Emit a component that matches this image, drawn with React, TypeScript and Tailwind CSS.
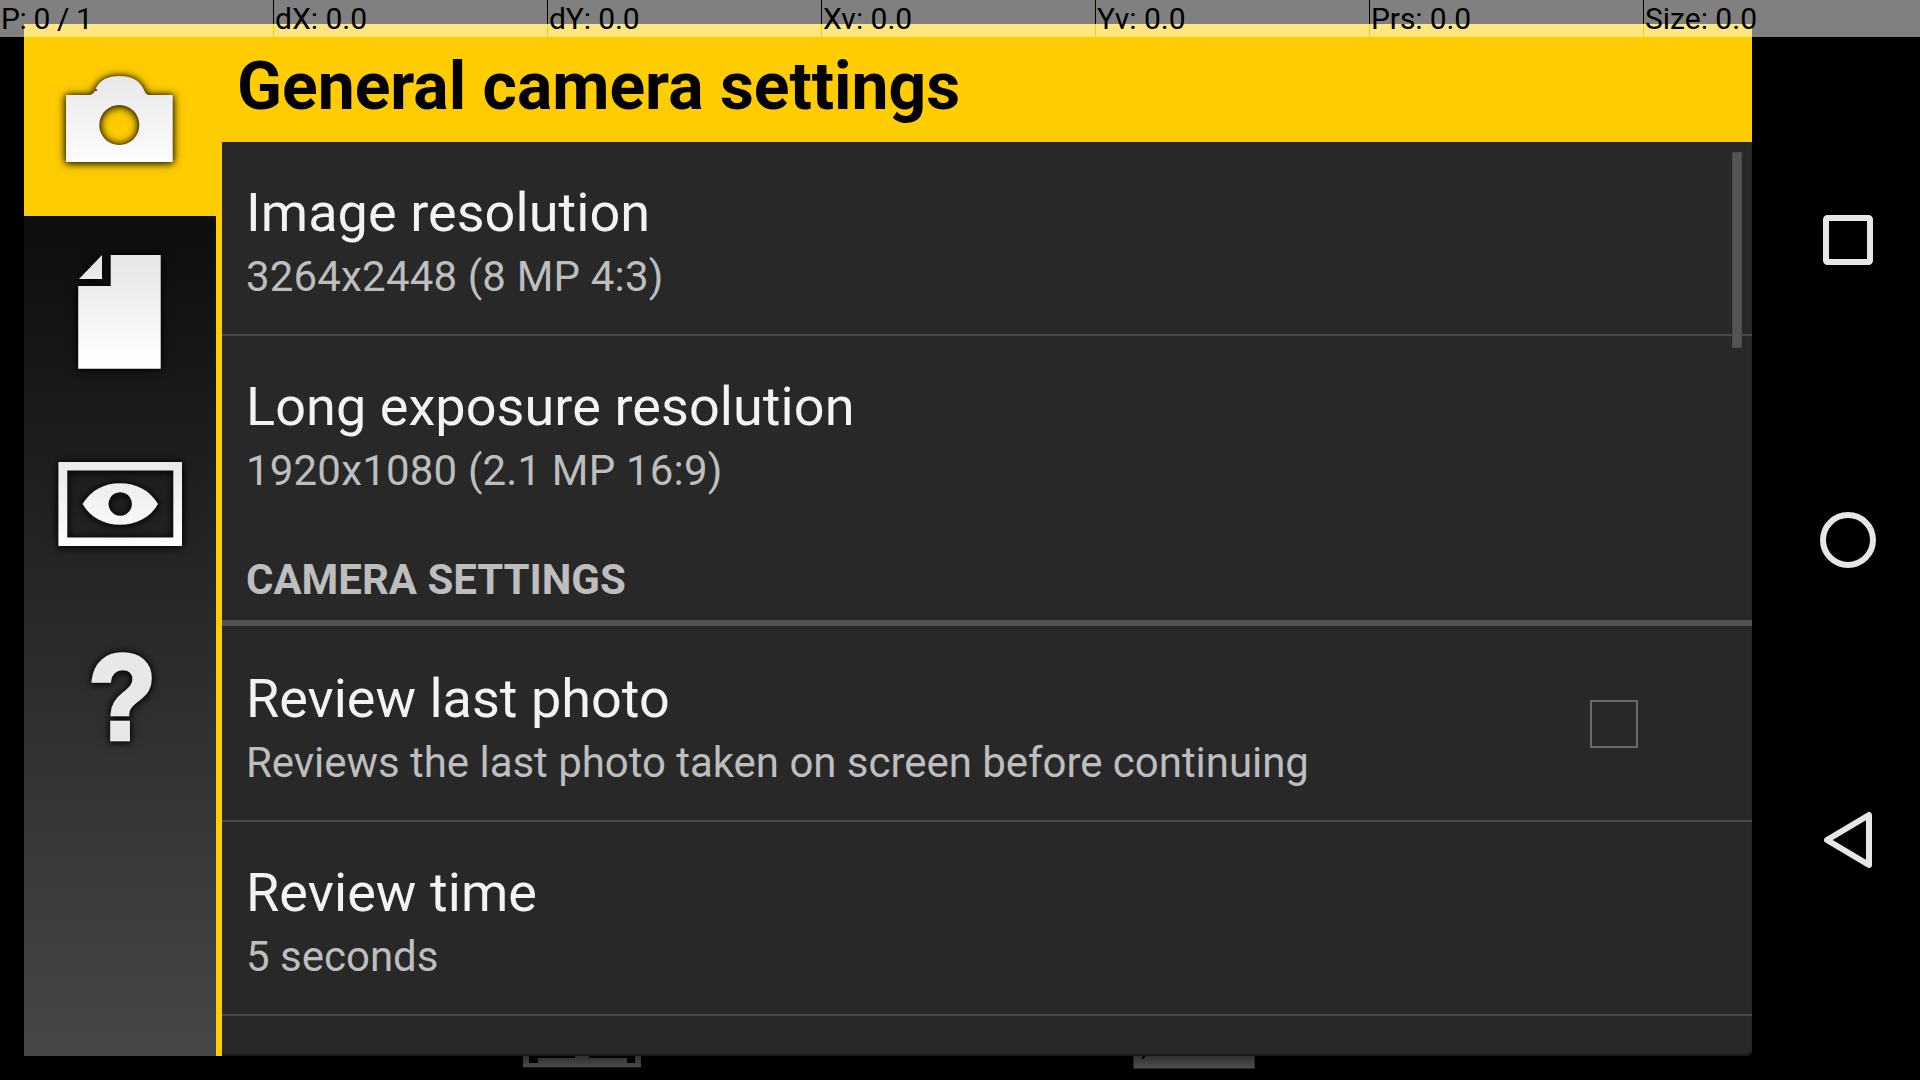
import type { ReactNode } from 'react';

const readouts = [
  { text: 'P: 0 / 1', tracking: 'tracking-[-0.4px]' },
  { text: 'dX: 0.0', tracking: '' },
  { text: 'dY: 0.0', tracking: 'tracking-[-0.1px]' },
  { text: 'Xv: 0.0', tracking: '' },
  { text: 'Yv: 0.0', tracking: '' },
  { text: 'Prs: 0.0', tracking: 'tracking-[-0.1px]' },
  { text: 'Size: 0.0', tracking: '' },
];

function PointerBar() {
  return (
    <div className="absolute inset-x-0 top-0 grid h-[37px] grid-cols-[274px_274px_274px_274px_274px_274px_276px]">
      {readouts.map(({ text, tracking }) => (
        <div
          key={text}
          className={`mr-px h-[37px] bg-white/50 pl-px text-[30px] leading-[37px] whitespace-pre text-black last:mr-0 ${tracking}`}
        >
          {text}
        </div>
      ))}
    </div>
  );
}

function TabIcon({ name, children }: { name: string; children: ReactNode }) {
  return (
    <svg
      viewBox="0 0 192 192"
      className="block h-[192px] w-[192px] overflow-visible [filter:drop-shadow(0_0_3px_rgba(0,0,0,0.6))_drop-shadow(0_1px_4px_rgba(0,0,0,0.8))]"
      role="img"
      aria-label={name}
    >
      <defs>
        <linearGradient id={name} gradientUnits="userSpaceOnUse" x1="0" x2="0" y1="50" y2="140">
          <stop offset="0" stopColor="#e8e8e8" />
          <stop offset="1" stopColor="#fdfdfd" />
        </linearGradient>
      </defs>
      <g fill={`url(#${name})`}>{children}</g>
    </svg>
  );
}

function Sidebar() {
  return (
    <nav className="flex w-[192px] shrink-0 flex-col bg-[linear-gradient(#000000,#474747)]">
      <div className="h-[192px] bg-[#ffcc00]">
        <TabIcon name="camera">
          <path
            fillRule="evenodd"
            d="M42 71H65C69 71 70.500 68 72 64C76 56 84 52 95.500 52C107 52 115 56 119 64C121 68 122 71 125 71H148.700V138H42ZM95.300 81a20 20 0 1 0 .01 0Z"
          />
          <rect x="71" y="65" width="2" height="2" fill="#ff0000" />
        </TabIcon>
      </div>
      <TabIcon name="document">
        <path d="M78 39V63H55ZM86.700 39H136.700V152.700H54.200V70H86.700Z" />
      </TabIcon>
      <TabIcon name="display">
        <path
          fillRule="evenodd"
          d="M34.400 54H158V138H34.400ZM43.300 62.500V129.500H149.300V62.500ZM58.500 96C67 82 80 75.200 96 75.200C112 75.200 126 82 134 96C126 110 112 116.700 96 116.700C80 116.700 67 110 58.500 96ZM96.200 84.300a11.700 11.700 0 1 0 .01 0Z"
        />
      </TabIcon>
      <TabIcon name="help">
        <text
          transform="translate(98.500 138.800) scale(0.91 1)"
          textAnchor="middle"
          fontFamily="Liberation Sans, sans-serif"
          fontWeight="700"
          fontSize="121"
          stroke="url(#help)"
          strokeWidth="4.600"
        >
          ?
        </text>
      </TabIcon>
    </nav>
  );
}

interface SettingProps {
  title: string;
  summary: string;
  className: string;
  titleClass?: string;
  summaryClass?: string;
  trailing?: ReactNode;
}

function Setting({ title, summary, className, titleClass = '', summaryClass = '', trailing }: SettingProps) {
  return (
    <div className={`flex shrink-0 items-start pl-6 ${className}`}>
      <div className="flex-1 whitespace-nowrap">
        <div className={`text-[54px] leading-[64px] text-[#f3f3f3] ${titleClass}`}>{title}</div>
        <div className={`mt-[7px] text-[42px] leading-[50px] text-[#bebebe] ${summaryClass}`}>{summary}</div>
      </div>
      {trailing}
    </div>
  );
}

function SettingsList() {
  return (
    <section className="relative flex min-h-0 flex-1 flex-col overflow-hidden rounded-br-[5px] bg-[#282828] shadow-[inset_0_-3px_2px_-1px_#181818]">
      <Setting
        title="Image resolution"
        summary="3264x2448 (8 MP 4:3)"
        className="h-[194px] border-b-2 border-[#494949] pt-[39px]"
        titleClass="tracking-[0.06px]"
        summaryClass="tracking-[0.17px]"
      />
      <Setting
        title="Long exposure resolution"
        summary="1920x1080 (2.1 MP 16:9)"
        className="h-[192px] pt-[39px]"
        titleClass="tracking-[0.07px]"
        summaryClass="tracking-[0.18px]"
      />
      <h2 className="h-[98px] shrink-0 border-b-[6px] border-[#535353] pt-[27px] pl-6 text-[42px] leading-[50px] font-bold tracking-[-0.04px] text-[#bebebe]">
        CAMERA SETTINGS
      </h2>
      <Setting
        title="Review last photo"
        summary="Reviews the last photo taken on screen before continuing"
        className="h-[196px] border-b-2 border-[#494949] pt-[41px]"
        summaryClass="tracking-[-0.04px]"
        trailing={<div className="mt-[33px] mr-[114px] h-12 w-12 border-2 border-[#6b6b6b]" />}
      />
      <Setting
        title="Review time"
        summary="5 seconds"
        className="h-[194px] border-b-2 border-[#494949] pt-[39px]"
        titleClass="tracking-[0.07px]"
      />
      <div className="absolute top-[10px] right-[10px] h-[196px] w-[10px] border border-[#4a4a4a] bg-[#545454]" />
    </section>
  );
}

function NavKeys() {
  return (
    <aside className="flex w-[168px] flex-col pt-[90px] pl-6">
      {[
        <rect key="recent" x="38" y="38" width="44" height="44" rx="1.500" />,
        <circle key="home" cx="60" cy="60" r="25" />,
        <path key="back" d="M39 60L81 35V85Z" />,
      ].map((shape, i) => (
        <div key={i} className="flex h-[300px] w-[144px] items-center justify-center">
          <svg viewBox="0 0 120 120" className="h-[120px] w-[120px]" fill="none" stroke="#e6e6e6" strokeWidth="6" strokeLinejoin="round">
            {shape}
          </svg>
        </div>
      ))}
    </aside>
  );
}

export default function App() {
  return (
    <div className="relative flex h-[1080px] w-[1920px] overflow-hidden bg-black font-['Roboto',sans-serif]">
      <div className="flex w-[1752px] flex-col pt-6 pl-6">
        <div className="flex h-[1032px] w-[1728px]">
          <Sidebar />
          <div className="w-[6px] shrink-0 bg-[#ffcc00]" />
          <div className="flex min-w-0 flex-1 flex-col">
            <h1 className="h-[118px] shrink-0 bg-[#ffcc00] pt-[23px] pl-[15px] text-[66px] leading-[80px] font-bold whitespace-nowrap text-black">
              General camera settings
            </h1>
            <SettingsList />
          </div>
        </div>
        <div className="flex h-6 pl-[499px]">
          <svg viewBox="0 0 118 12" className="h-3 w-[118px]">
            <defs>
              <linearGradient id="edge" x1="0" x2="0" y1="0" y2="1">
                <stop offset="0" stopColor="#303030" />
                <stop offset="1" stopColor="#4a4a4a" />
              </linearGradient>
            </defs>
            <path fill="url(#edge)" d="M0 0H6V7H15V2H52V0H66V2H104V7H112V0H118V11.300H0Z" />
          </svg>
          <div className="ml-[492px] h-[13px] w-[122px] border-x border-b border-[#242424] bg-linear-to-b from-[#303030] to-[#505050]">
            <svg viewBox="0 0 4 4" className="ml-2 h-1 w-1">
              <path d="M0 0H4L0 4Z" />
            </svg>
          </div>
        </div>
      </div>
      <NavKeys />
      <PointerBar />
    </div>
  );
}
